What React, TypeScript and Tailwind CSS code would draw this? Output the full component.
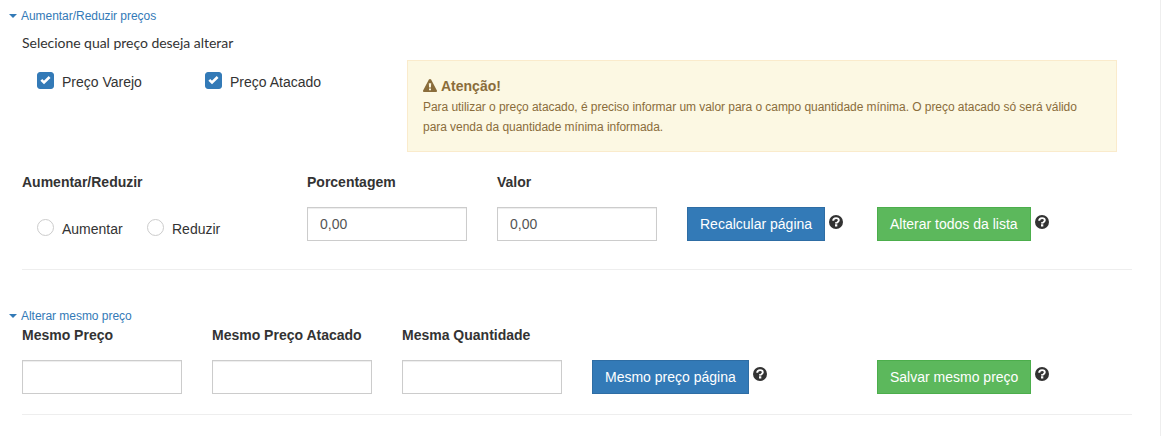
import { useState, type ReactNode } from "react";

function SectionLink({ children }: { children: ReactNode }) {
  return (
    <a className="flex h-5 items-center gap-1 pl-[9px] text-xs leading-5 tracking-[-0.04px] text-[#337ab7] cursor-pointer">
      <span className="h-0 w-0 border-x-4 border-t-4 border-x-transparent border-t-[#337ab7]" />
      {children}
    </a>
  );
}

function Checkbox({ label }: { label: string }) {
  const [checked, setChecked] = useState(true);

  return (
    <label className="flex w-[168px] cursor-pointer pl-[15px]">
      <input type="checkbox" className="sr-only" checked={checked} onChange={(e) => setChecked(e.target.checked)} />
      <span
        className={`h-[17px] w-[17px] rounded-[3px] border ${
          checked ? "border-[#337ab7] bg-[#337ab7]" : "border-[#cccccc] bg-white"
        }`}
      >
        {checked && (
          <svg viewBox="0 0 15 15" className="h-[15px] w-[15px]">
            <path d="M3.3 6.9 6 9.5 11.6 4" fill="none" stroke="#fff" strokeWidth="2.6" />
          </svg>
        )}
      </span>
      <span className="pl-2 text-sm leading-5">{label}</span>
    </label>
  );
}

function Radio({ label, className }: { label: string; className: string }) {
  return (
    <label className={`flex cursor-pointer ${className}`}>
      <input type="radio" name="operacao" className="sr-only" />
      <span className="h-[17px] w-[17px] rounded-full border border-[#cccccc] bg-white" />
      <span className="pl-2 text-sm leading-5">{label}</span>
    </label>
  );
}

function Field({ label, value = "" }: { label: string; value?: string }) {
  return (
    <div className="w-[190px]">
      <label className="block h-[35px] text-sm font-bold leading-5">{label}</label>
      <input
        defaultValue={value}
        className="block h-[34px] w-[160px] border border-[#cccccc] bg-white px-3 text-sm text-[#555555] shadow-[inset_0_1px_1px_rgba(0,0,0,0.075)] outline-none"
      />
    </div>
  );
}

function Help() {
  return (
    <svg viewBox="0 0 14 14" className="h-3.5 w-3.5 shrink-0">
      <circle cx="7" cy="7" r="7" fill="#333" />
      <path d="M4.2 5.7C4.2 3.9 5.3 3.1 7.1 3.1c1.6 0 2.7.9 2.7 2.2 0 1.7-1.9 1.6-1.9 2.9" fill="none" stroke="#fff" strokeWidth="1.9" />
      <path d="M6 7.3H8.3v1.1H6zM6 9.2h2.3v2.2H6z" fill="#fff" />
    </svg>
  );
}

function Action({ label, color, width, iconTop }: { label: string; color: string; width: string; iconTop: string }) {
  return (
    <div className={`flex gap-1 ${width}`}>
      <button className={`h-[34px] whitespace-nowrap border px-3 text-sm leading-5 text-white ${color}`}>{label}</button>
      <span className={iconTop}>
        <Help />
      </span>
    </div>
  );
}

const primary = "border-[#2e6da4] bg-[#337ab7]";
const success = "border-[#4cae4c] bg-[#5cb85c]";

export default function App() {
  return (
    <div className="h-[436px] w-[1161px] border-r border-[#eeeeee] bg-white pt-[6px] font-['Liberation_Sans',Arial,sans-serif] text-[#333333]">
      <SectionLink>Aumentar/Reduzir preços</SectionLink>
      <section className="ml-[22px] w-[1110px]">
        <p className="mt-[7px] h-[27px] font-[Lato,sans-serif] text-sm leading-5 tracking-[-0.03px]">
          Selecione qual preço deseja alterar
        </p>
        <div className="flex">
          <div className="flex w-[385px] pt-3">
            <Checkbox label="Preço Varejo" />
            <Checkbox label="Preço Atacado" />
          </div>
          <div className="h-[92px] w-[710px] border border-[#faebcc] bg-[#fcf8e3] p-[15px] text-xs leading-5 text-[#8a6d3b]">
            <div className="flex items-center gap-1 text-sm font-bold leading-5">
              <svg viewBox="0 0 14 14" className="h-3.5 w-3.5">
                <path
                  d="M5.9.6c.5-.8 1.7-.8 2.2 0L13.9 11.4c.5.9.1 1.6-.8 1.6H.9c-.9 0-1.3-.7-.8-1.6zM5.8 4.2l.3 4.3h1.8l.3-4.3zM6 9.4v1.9h2V9.4z"
                  fill="currentColor"
                  fillRule="evenodd"
                />
              </svg>
              Atenção!
            </div>
            <p className="pt-px tracking-[-0.048px]">
              Para utilizar o preço atacado, é preciso informar um valor para o campo quantidade mínima. O preço atacado só será
              válido para venda da quantidade mínima informada.
            </p>
          </div>
        </div>

        <div className="mt-5 flex">
          <div className="w-[285px]">
            <div className="text-sm font-bold leading-5">Aumentar/Reduzir</div>
            <div className="flex pl-[15px] pt-[27px]">
              <Radio label="Aumentar" className="w-[110px]" />
              <Radio label="Reduzir" className="w-[110px]" />
            </div>
          </div>
          <Field label="Porcentagem" value="0,00" />
          <Field label="Valor" value="0,00" />
          <div className="flex pt-[35px]">
            <Action label="Recalcular página" color={primary} width="w-[190px]" iconTop="pt-2" />
            <Action label="Alterar todos da lista" color={success} width="w-[190px]" iconTop="pt-2" />
          </div>
        </div>
        <hr className="mt-7 border-[#eeeeee]" />
      </section>

      <div className="mt-9">
        <SectionLink>Alterar mesmo preço</SectionLink>
      </div>
      <section className="ml-[22px] -mt-px w-[1110px]">
        <div className="flex">
          <Field label="Mesmo Preço" />
          <Field label="Mesmo Preço Atacado" />
          <Field label="Mesma Quantidade" />
          <div className="flex pt-[35px]">
            <Action label="Mesmo preço página" color={primary} width="w-[285px]" iconTop="pt-[7px]" />
            <Action label="Salvar mesmo preço" color={success} width="w-[190px]" iconTop="pt-[7px]" />
          </div>
        </div>
        <hr className="mt-5 border-[#eeeeee]" />
      </section>
    </div>
  );
}
